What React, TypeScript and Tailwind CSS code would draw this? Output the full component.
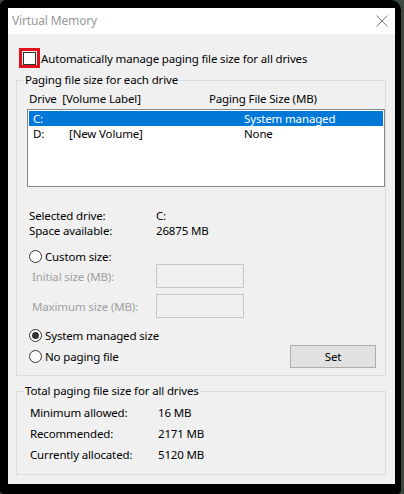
export default function App() {
  return (
    <div className="w-[404px] h-[494px] bg-[#3e4a40] font-['Noto_Sans',sans-serif] text-[11.5px] leading-[15px] tracking-[-0.15px] text-black">
      <div className="w-[401px] h-[494px] bg-black rounded-tl-[6px] rounded-tr-[10px] rounded-bl-[4px] rounded-br-[4px] pl-[8px] pt-[8px]">
        <div className="relative w-[387px] h-[476px] bg-[#f0f0f0] overflow-hidden flex flex-col">
          {/* Title bar */}
          <div className="h-[26px] bg-white flex items-center justify-between pl-[4px] pr-[7px]">
            <span className="text-[#999999] text-[12px] mb-[2px]">Virtual Memory</span>
            <svg width="12" height="12" viewBox="0 0 12 12" className="mb-[1px]">
              <path d="M0.5 0.5 L11.5 11.5 M11.5 0.5 L0.5 11.5" stroke="#777" strokeWidth="1" />
            </svg>
          </div>

          {/* Auto manage */}
          <div className="mt-[14px] ml-[11px] h-[20px] flex items-center">
            <div className="w-[21px] h-[20px] border-[3px] border-[#e2101c] flex items-center justify-center">
              <div className="w-[13px] h-[13px] border border-[#333333] bg-white" />
            </div>
            <span className="ml-[1px]">Automatically manage paging file size for all drives</span>
          </div>

          {/* Paging file size for each drive */}
          <fieldset className="mt-[4px] ml-[8px] mr-[9px] border border-[#dcdcdc] pb-[7px]">
            <legend className="ml-[7px] px-[1px] h-[16px] leading-[16px]">Paging file size for each drive</legend>
            <div className="pl-[10px]">
              <div className="mt-[2px] h-[16px] flex items-center">
                <span className="w-[180px] ml-[2px] whitespace-pre">Drive  [Volume Label]</span>
                <span>Paging File Size (MB)</span>
              </div>

              <div className="mt-[3px] h-[78px] border border-[#828790] bg-white p-[1px]">
                <div className="h-[15px] bg-[#0078d7] text-white flex items-center pl-[4px]">
                  <span className="w-[36px]">C:</span>
                  <span className="w-[175px]"></span>
                  <span>System managed</span>
                </div>
                <div className="h-[15px] flex items-center pl-[4px]">
                  <span className="w-[36px]">D:</span>
                  <span className="w-[175px]">[New Volume]</span>
                  <span>None</span>
                </div>
              </div>

              <div className="mt-[21px] h-[15px] flex items-center">
                <span className="w-[127px] ml-[2px]">Selected drive:</span>
                <span>C:</span>
              </div>
              <div className="h-[15px] flex items-center">
                <span className="w-[127px] ml-[2px]">Space available:</span>
                <span>26875 MB</span>
              </div>

              <div className="mt-[10px] h-[16px] flex items-center ml-[2px]">
                <Radio checked={false} />
                <span className="ml-[3px]">Custom size:</span>
              </div>

              <div className="h-[24px] flex items-center">
                <span className="w-[124px] ml-[5px] text-[#a0a0a0]">Initial size (MB):</span>
                <div className="w-[88px] h-[24px] border border-[#c8c8c8] bg-[#f0f0f0]" />
              </div>
              <div className="mt-[6px] h-[24px] flex items-center">
                <span className="w-[124px] ml-[5px] text-[#a0a0a0]">Maximum size (MB):</span>
                <div className="w-[88px] h-[24px] border border-[#c8c8c8] bg-[#f0f0f0]" />
              </div>

              <div className="mt-[9px] h-[16px] flex items-center ml-[2px]">
                <Radio checked={true} />
                <span className="ml-[3px]">System managed size</span>
              </div>
              <div className="mt-[1px] h-[24px] flex items-center justify-between ml-[2px] mr-[9px]">
                <div className="flex items-center">
                  <Radio checked={false} />
                  <span className="ml-[3px]">No paging file</span>
                </div>
                <button className="w-[86px] h-[23px] border border-[#adadad] bg-[#e1e1e1] flex items-center justify-center">
                  Set
                </button>
              </div>
            </div>
          </fieldset>

          {/* Total */}
          <fieldset className="mt-[7px] ml-[8px] mr-[9px] border border-[#dcdcdc] pb-[9px]">
            <legend className="ml-[7px] px-[1px] h-[16px] leading-[16px]">Total paging file size for all drives</legend>
            <div className="pl-[13px] mt-[3px]">
              <div className="h-[21px] flex items-center">
                <span className="w-[128px]">Minimum allowed:</span>
                <span>16 MB</span>
              </div>
              <div className="h-[21px] flex items-center">
                <span className="w-[128px]">Recommended:</span>
                <span>2171 MB</span>
              </div>
              <div className="h-[21px] flex items-center">
                <span className="w-[128px]">Currently allocated:</span>
                <span>5120 MB</span>
              </div>
            </div>
          </fieldset>

          <span className="absolute left-[302px] top-[473px] text-[13px] leading-[16px] tracking-[1px] font-['Liberation_Sans',sans-serif] text-[#111]">
            www.deuaq.com
          </span>
        </div>
      </div>
    </div>
  );
}

function Radio({ checked }: { checked: boolean }) {
  return (
    <div className="w-[13px] h-[13px] rounded-full border border-[#333333] bg-white flex items-center justify-center">
      {checked && <div className="w-[7px] h-[7px] rounded-full bg-[#333333]" />}
    </div>
  );
}
